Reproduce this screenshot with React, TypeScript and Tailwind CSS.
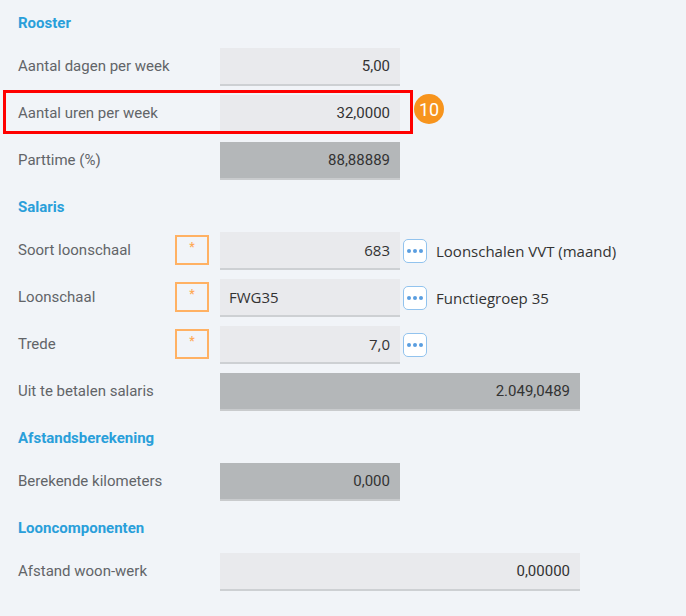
import type { ReactNode } from 'react';

type FieldProps = {
  value: string;
  width?: 'short' | 'long';
  readOnly?: boolean;
  align?: 'left' | 'right';
  lookup?: boolean;
};

function Field({ value, width = 'short', readOnly = false, align = 'right', lookup = false }: FieldProps) {
  return (
    <div
      className={[
        'flex h-[38px] shrink-0 items-center border-b-2 text-[15px] text-[#333]',
        width === 'long' ? 'w-[360px]' : 'w-[180px]',
        readOnly ? 'border-[#c9cbcd] bg-[#b4b7b9]' : 'border-[#cdd0d3] bg-[#e9eaed]',
        align === 'right' ? 'justify-end pr-[10px]' : 'justify-start pl-[9px]',
        lookup ? "font-['Open_Sans',sans-serif]" : '',
      ].join(' ')}
    >
      {value}
    </div>
  );
}

function Required() {
  return (
    <div className="mr-[11px] mt-[3px] flex h-[30px] w-[34px] shrink-0 justify-center self-start border-2 border-[#ffb163] text-[12px] font-bold leading-[20px] text-[#ffaa55]">
      *
    </div>
  );
}

function LookupButton() {
  return (
    <button className="ml-[3px] flex h-[24px] w-[24px] shrink-0 items-center justify-center gap-[2px] rounded-[5px] border-[1.5px] border-[#92c3ee] bg-white">
      <span className="h-[4px] w-[4px] rounded-full bg-[#5a9ee0]" />
      <span className="h-[4px] w-[4px] rounded-full bg-[#5a9ee0]" />
      <span className="h-[4px] w-[4px] rounded-full bg-[#5a9ee0]" />
    </button>
  );
}

type RowProps = {
  label: string;
  required?: boolean;
  children: ReactNode;
  extra?: ReactNode;
};

function Row({ label, required, children, extra }: RowProps) {
  return (
    <div className="relative flex h-[38px] items-center">
      <div className="flex h-full w-[202px] shrink-0 items-center">
        <span className="flex-1 pb-[1px] text-[15px] text-[#626468]">{label}</span>
        {required && <Required />}
      </div>
      {children}
      {extra}
    </div>
  );
}

function Section({ title, children }: { title: string; children: ReactNode }) {
  return (
    <section className="flex flex-col">
      <h2 className="mb-1 flex h-[44px] items-center pt-[2px] text-[15px] font-bold text-[#2a9fda]">{title}</h2>
      <div className="flex flex-col gap-[9px]">{children}</div>
    </section>
  );
}

export default function App() {
  return (
    <div className="min-h-[616px] w-full bg-[#f1f4f8] pl-[18px] font-['Roboto',sans-serif]">
      <div className="flex flex-col gap-1">
        <Section title="Rooster">
          <Row label="Aantal dagen per week">
            <Field value="5,00" />
          </Row>
          <Row
            label="Aantal uren per week"
            extra={
              <>
                <div className="pointer-events-none absolute left-[-15px] top-[-5px] h-[44px] w-[410px] border-[3px] border-[#ff0000]" />
                <div className="absolute left-[396px] top-[-1px] flex h-[30px] w-[30px] items-center justify-center rounded-full bg-[#f7941d] text-[18px] text-white">
                  10
                </div>
              </>
            }
          >
            <Field value="32,0000" />
          </Row>
          <Row label="Parttime (%)">
            <Field value="88,88889" readOnly />
          </Row>
        </Section>

        <Section title="Salaris">
          <Row
            label="Soort loonschaal"
            required
            extra={
              <>
                <LookupButton />
                <span className="ml-[9px] font-['Open_Sans',sans-serif] text-[15px] text-[#333]">Loonschalen VVT (maand)</span>
              </>
            }
          >
            <Field value="683" lookup />
          </Row>
          <Row
            label="Loonschaal"
            required
            extra={
              <>
                <LookupButton />
                <span className="ml-[9px] font-['Open_Sans',sans-serif] text-[15px] text-[#333]">Functiegroep 35</span>
              </>
            }
          >
            <Field value="FWG35" align="left" lookup />
          </Row>
          <Row label="Trede" required extra={<LookupButton />}>
            <Field value="7,0" lookup />
          </Row>
          <Row label="Uit te betalen salaris">
            <Field value="2.049,0489" width="long" readOnly />
          </Row>
        </Section>

        <Section title="Afstandsberekening">
          <Row label="Berekende kilometers">
            <Field value="0,000" readOnly />
          </Row>
        </Section>

        <Section title="Looncomponenten">
          <Row label="Afstand woon-werk">
            <Field value="0,00000" width="long" />
          </Row>
        </Section>
      </div>
    </div>
  );
}
